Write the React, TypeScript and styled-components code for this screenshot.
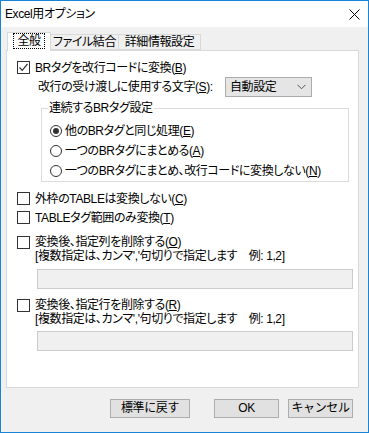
import styled, { createGlobalStyle } from "styled-components";

const GlobalStyle = createGlobalStyle`
  html, body {
    margin: 0;
    padding: 0;
    background: #ffffff;
  }
  body {
    font-family: "Liberation Sans", "Noto Sans CJK JP", sans-serif;
    font-size: 12px;
    line-height: 16px;
    color: #000000;
    font-feature-settings: "palt";
    letter-spacing: -0.4px;
  }
  * {
    box-sizing: border-box;
  }
`;

const Window = styled.div`
  width: 369px;
  height: 433px;
  border: 1px solid #1883d7;
  background: #f0f0f0;
  display: flex;
  flex-direction: column;
`;

const TitleBar = styled.div`
  height: 26px;
  background: #ffffff;
  display: flex;
  align-items: center;
  justify-content: space-between;
  padding: 0 8px 0 4px;
`;

const Title = styled.span`
  font-size: 12px;
  color: #000000;
`;

const Body = styled.div`
  flex: 1;
  display: flex;
  flex-direction: column;
  padding: 5px 0 0 5px;
`;

const TabRow = styled.div`
  display: flex;
  align-items: flex-end;
  height: 18px;
  padding-left: 1px;
  position: relative;
  z-index: 1;
`;

const Tab = styled.div<{ $active?: boolean; $w: number }>`
  width: ${(p) => p.$w}px;
  height: ${(p) => (p.$active ? 19 : 16)}px;
  margin-bottom: ${(p) => (p.$active ? -1 : 0)}px;
  background: ${(p) => (p.$active ? "#ffffff" : "#f0f0f0")};
  border: 1px solid #d9d9d9;
  border-bottom: ${(p) => (p.$active ? "none" : "1px solid #d9d9d9")};
  margin-left: ${(p) => (p.$active ? 0 : -1)}px;
  display: flex;
  align-items: flex-start;
  justify-content: center;
  padding-top: ${(p) => (p.$active ? 1 : 0)}px;
  line-height: 15px;
`;

const FocusLabel = styled.span`
  outline: 1px dotted #000000;
  padding: 0 3px;
  line-height: 14px;
`;

const Panel = styled.div`
  width: 353px;
  height: 338px;
  background: #ffffff;
  border: 1px solid #d9d9d9;
  display: flex;
  flex-direction: column;
  padding: 9px 0 0 10px;
`;

const Row = styled.div<{ $mt?: number }>`
  display: flex;
  align-items: flex-start;
  margin-top: ${(p) => p.$mt ?? 0}px;
`;

const Box = styled.span`
  width: 13px;
  height: 13px;
  border: 1px solid #333333;
  background: #ffffff;
  flex: none;
  display: flex;
  align-items: center;
  justify-content: center;
  margin-top: 1px;
`;

const Label = styled.div<{ $lh?: number }>`
  margin-left: 5px;
  line-height: ${(p) => p.$lh ?? 16}px;
  white-space: nowrap;
`;

const U = styled.span`
  text-decoration: underline;
  text-underline-offset: 1px;
`;

const SubRow = styled.div`
  display: flex;
  align-items: center;
  height: 20px;
  margin-top: 1px;
  padding-left: 21px;
`;

const SubLabel = styled.span`
  width: 187px;
  white-space: nowrap;
`;

const Combo = styled.div`
  width: 87px;
  height: 20px;
  background: #e5e5e5;
  border: 1px solid #acacac;
  display: flex;
  align-items: center;
  justify-content: space-between;
  padding: 0 5px 0 4px;
`;

const Group = styled.fieldset`
  margin: 3px 0 0 24px;
  width: 308px;
  padding: 5px 0 0 8px;
  border: 1px solid #dcdcdc;
  min-inline-size: 0;
`;

const Legend = styled.legend`
  margin-left: -2px;
  padding: 0 1px;
  line-height: 16px;
`;

const RadioRow = styled.div`
  display: flex;
  align-items: center;
  height: 20px;
`;

const Circle = styled.span`
  width: 12px;
  height: 12px;
  border-radius: 50%;
  border: 1px solid #333333;
  display: flex;
  align-items: center;
  justify-content: center;
  flex: none;
`;

const Dot = styled.span`
  width: 6px;
  height: 6px;
  border-radius: 50%;
  background: #333333;
`;

const RadioText = styled.span`
  margin-left: 3px;
  white-space: nowrap;
`;

const TextField = styled.div<{ $mt: number }>`
  width: 316px;
  height: 20px;
  margin: ${(p) => p.$mt}px 0 0 20px;
  background: #f0f0f0;
  border: 1px solid #cccccc;
`;

const ButtonRow = styled.div`
  display: flex;
  justify-content: flex-end;
  margin-top: 11px;
  padding-right: 15px;
`;

const Button = styled.button<{ $w: number; $ml: number }>`
  width: ${(p) => p.$w}px;
  height: 19px;
  margin-left: ${(p) => p.$ml}px;
  background: #e1e1e1;
  border: 1px solid #adadad;
  font-family: inherit;
  font-size: 12px;
  letter-spacing: inherit;
  line-height: 15px;
  padding: 0;
  color: #000000;
`;

function Check({ checked }: { checked?: boolean }) {
  return (
    <Box>
      {checked && (
        <svg width="11" height="11" viewBox="0 0 11 11">
          <polyline points="1.5,5.5 4.2,8.3 9.5,2" fill="none" stroke="#333" strokeWidth="1.2" />
        </svg>
      )}
    </Box>
  );
}

function Radio({ label, hot, checked }: { label: string; hot: string; checked?: boolean }) {
  return (
    <RadioRow>
      <Circle>{checked && <Dot />}</Circle>
      <RadioText>
        {label}(<U>{hot}</U>)
      </RadioText>
    </RadioRow>
  );
}

export default function App() {
  return (
    <>
      <GlobalStyle />
      <Window>
        <TitleBar>
          <Title>Excel用オプション</Title>
          <svg width="11" height="11" viewBox="0 0 11 11">
            <path d="M0.5 0.5 L10.5 10.5 M10.5 0.5 L0.5 10.5" stroke="#000" strokeWidth="1" />
          </svg>
        </TitleBar>
        <Body>
          <TabRow>
            <Tab $active $w={44}>
              <FocusLabel>全般</FocusLabel>
            </Tab>
            <Tab $w={69}>ファイル結合</Tab>
            <Tab $w={83}>詳細情報設定</Tab>
          </TabRow>
          <Panel>
            <Row>
              <Check checked />
              <Label>
                BRタグを改行コードに変換(<U>B</U>)
              </Label>
            </Row>
            <SubRow>
              <SubLabel>
                改行の受け渡しに使用する文字(<U>S</U>):
              </SubLabel>
              <Combo>
                <span>自動設定</span>
                <svg width="9" height="6" viewBox="0 0 9 6">
                  <polyline points="0.5,0.8 4.5,4.8 8.5,0.8" fill="none" stroke="#555" strokeWidth="1" />
                </svg>
              </Combo>
            </SubRow>
            <Group>
              <Legend>連続するBRタグ設定</Legend>
              <Radio label="他のBRタグと同じ処理" hot="E" checked />
              <Radio label="一つのBRタグにまとめる" hot="A" />
              <Radio label="一つのBRタグにまとめ、改行コードに変換しない" hot="N" />
            </Group>
            <Row $mt={9}>
              <Check />
              <Label>
                外枠のTABLEは変換しない(<U>C</U>)
              </Label>
            </Row>
            <Row $mt={3}>
              <Check />
              <Label>
                TABLEタグ範囲のみ変換(<U>T</U>)
              </Label>
            </Row>
            <Row $mt={9}>
              <Check />
              <Label $lh={14}>
                変換後、指定列を削除する(<U>O</U>)
                <br />
                [複数指定は、カンマ','句切りで指定します　例: 1,2]
              </Label>
            </Row>
            <TextField $mt={6} />
            <Row $mt={9}>
              <Check />
              <Label $lh={14}>
                変換後、指定行を削除する(<U>R</U>)
                <br />
                [複数指定は、カンマ','句切りで指定します　例: 1,2]
              </Label>
            </Row>
            <TextField $mt={5} />
          </Panel>
          <ButtonRow>
            <Button $w={80} $ml={0}>標準に戻す</Button>
            <Button $w={65} $ml={24}>OK</Button>
            <Button $w={65} $ml={9}>キャンセル</Button>
          </ButtonRow>
        </Body>
      </Window>
    </>
  );
}
